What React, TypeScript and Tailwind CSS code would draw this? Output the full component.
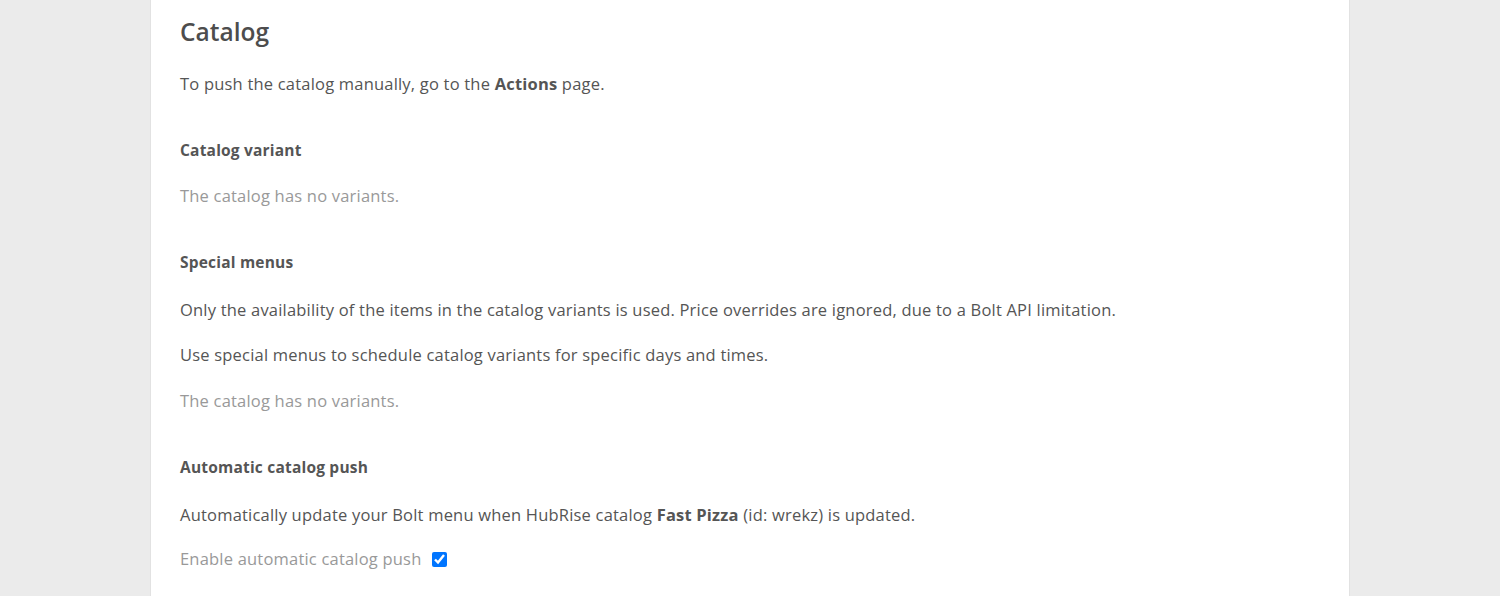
import React from "react";

const font = { fontFamily: '"Open Sans", "Noto Sans", sans-serif' };

export default function App() {
	return (
		<div className="min-h-[596px] bg-[#ebebeb]" style={font}>
			<div className="mx-auto w-[1200px] min-h-[596px] bg-white border-x border-[#e2e2e2] px-[29px] pt-[17px] text-[#555]">
				<h1 className="text-[24.5px] leading-[30px] font-semibold text-[#4d4d4d]">
					Catalog
				</h1>
				<p className="mt-[25px] text-[16.5px] leading-[24px] tracking-[0.2px]">
					To push the catalog manually, go to the <b className="font-bold">Actions</b> page.
				</p>

				<h2 className="mt-[43px] text-[15.5px] leading-[22px] font-bold tracking-[0.2px]">
					Catalog variant
				</h2>
				<p className="mt-[23px] text-[16.5px] leading-[24px] tracking-[0.2px] text-[#999]">
					The catalog has no variants.
				</p>

				<h2 className="mt-[43px] text-[15.5px] leading-[22px] font-bold tracking-[0.2px]">
					Special menus
				</h2>
				<p className="mt-[25px] text-[16.5px] leading-[24px] tracking-[0.2px]">
					Only the availability of the items in the catalog variants is used. Price
					overrides are ignored, due to a Bolt API limitation.
				</p>
				<p className="mt-[21px] text-[16.5px] leading-[24px] tracking-[0.2px]">
					Use special menus to schedule catalog variants for specific days and times.
				</p>
				<p className="mt-[22px] text-[16.5px] leading-[24px] tracking-[0.2px] text-[#999]">
					The catalog has no variants.
				</p>

				<h2 className="mt-[43px] text-[15.5px] leading-[22px] font-bold tracking-[0.2px]">
					Automatic catalog push
				</h2>
				<p className="mt-[25px] text-[16.5px] leading-[24px] tracking-[0.2px]">
					Automatically update your Bolt menu when HubRise catalog{" "}
					<b className="font-bold">Fast Pizza</b> (id: wrekz) is updated.
				</p>
				<label className="mt-[20px] flex items-center gap-[10px] text-[16.5px] leading-[24px] tracking-[0.2px] text-[#999]">
					Enable automatic catalog push
					<input
						type="checkbox"
						checked
						readOnly
						className="w-[15px] h-[15px] accent-[#0075ff]"
					/>
				</label>
			</div>
		</div>
	);
}
